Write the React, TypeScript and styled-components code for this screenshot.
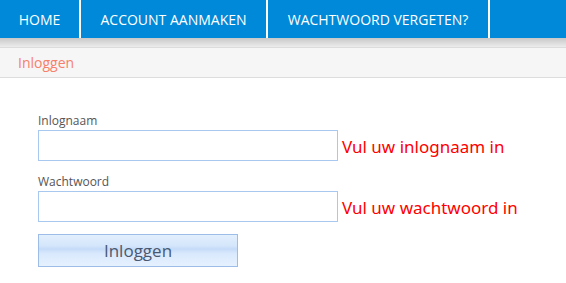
import styled, { createGlobalStyle } from "styled-components";

const GlobalStyle = createGlobalStyle`
  body {
    margin: 0;
    background: #ffffff;
    font-family: "Open Sans", "Noto Sans", sans-serif;
  }
`;

const NavBar = styled.nav`
  display: flex;
  height: 38px;
  background: #0089d9;
`;

const NavItem = styled.a<{ $width: number }>`
  display: flex;
  align-items: center;
  justify-content: center;
  width: ${(p) => p.$width}px;
  border-right: 2px solid #ffffff;
  color: #ffffff;
  font-size: 14px;
  text-transform: uppercase;
  text-decoration: none;
  box-sizing: border-box;
`;

const Shadow = styled.div`
  height: 9px;
  background: linear-gradient(#c8c8c8, #ececec);
  border-bottom: 1px solid #dcdcdc;
`;

const Breadcrumb = styled.div`
  height: 29px;
  padding-left: 18px;
  display: flex;
  align-items: center;
  background: #f6f6f6;
  border-bottom: 1px solid #dddddd;
  color: #f7806a;
  font-size: 14px;
`;

const Form = styled.form`
  padding: 35px 0 0 38px;
  display: flex;
  flex-direction: column;
`;

const Label = styled.label`
  display: block;
  font-size: 12px;
  color: #555555;
  line-height: 16px;
  margin-bottom: 1px;
`;

const Field = styled.div`
  margin-bottom: 13px;
`;

const Row = styled.div`
  display: flex;
  align-items: center;
  gap: 4px;
`;

const Input = styled.input`
  width: 300px;
  height: 31px;
  box-sizing: border-box;
  border: 1px solid #a9c8f0;
  outline: none;
  margin: 0;
`;

const Error = styled.span`
  color: #ff0000;
  font-family: "Noto Sans", "Open Sans", sans-serif;
  font-size: 17px;
  padding-top: 1px;
`;

const Button = styled.button`
  width: 200px;
  height: 33px;
  margin-top: -1px;
  border: 1px solid #9dbde8;
  background: linear-gradient(
    #e3effd 0%,
    #d4e6fb 35%,
    #c4dbf8 45%,
    #d9e9fd 60%,
    #e6f1fe 100%
  );
  color: #4a5870;
  font-family: "Open Sans", "Noto Sans", sans-serif;
  font-size: 17px;
  padding: 0;
  cursor: pointer;
`;

export default function App() {
  return (
    <>
      <GlobalStyle />
      <NavBar>
        <NavItem $width={81}>Home</NavItem>
        <NavItem $width={187}>Account aanmaken</NavItem>
        <NavItem $width={222}>Wachtwoord vergeten?</NavItem>
      </NavBar>
      <Shadow />
      <Breadcrumb>Inloggen</Breadcrumb>
      <Form>
        <Field>
          <Label>Inlognaam</Label>
          <Row>
            <Input type="text" />
            <Error>Vul uw inlognaam in</Error>
          </Row>
        </Field>
        <Field>
          <Label>Wachtwoord</Label>
          <Row>
            <Input type="password" />
            <Error>Vul uw wachtwoord in</Error>
          </Row>
        </Field>
        <div>
          <Button type="button">Inloggen</Button>
        </div>
      </Form>
    </>
  );
}
